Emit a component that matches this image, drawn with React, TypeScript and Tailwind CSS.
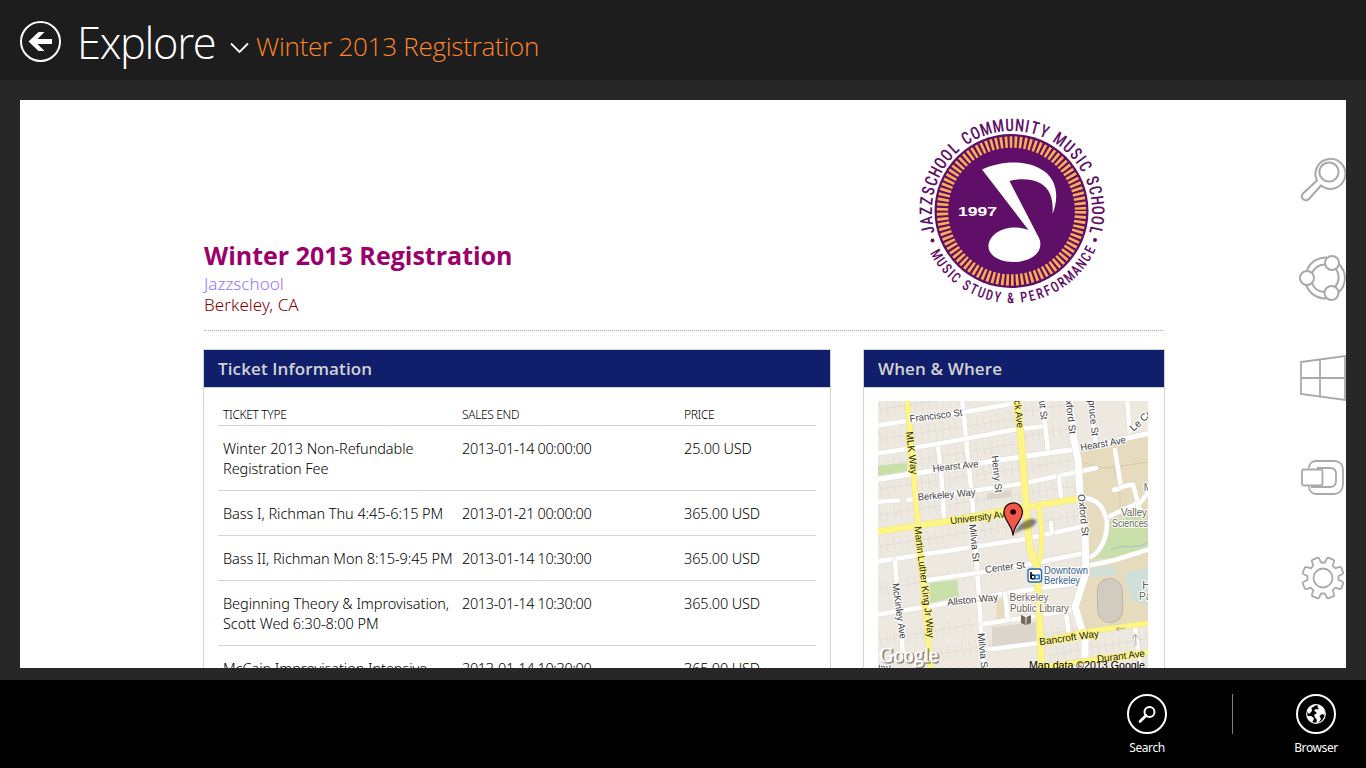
import type { ReactNode } from "react";

type Ticket = { lines: string[]; end: string; price: string };

const tickets: Ticket[] = [
  { lines: ["Winter 2013 Non-Refundable", "Registration Fee"], end: "2013-01-14 00:00:00", price: "25.00 USD" },
  { lines: ["Bass I, Richman Thu 4:45-6:15 PM"], end: "2013-01-21 00:00:00", price: "365.00 USD" },
  { lines: ["Bass II, Richman Mon 8:15-9:45 PM"], end: "2013-01-14 10:30:00", price: "365.00 USD" },
  { lines: ["Beginning Theory & Improvisation,", "Scott Wed 6:30-8:00 PM"], end: "2013-01-14 10:30:00", price: "365.00 USD" },
  { lines: ["McCain Improvisation Intensive"], end: "2013-01-14 10:30:00", price: "365.00 USD" },
];

const glyphWeight = (c: string) => (c === "I" ? 0.55 : c === " " ? 0.6 : c === "M" ? 1.25 : c === "J" ? 0.9 : 1);

function RingText({ text, from, to, radius, size, inward }: { text: string; from: number; to: number; radius: number; size: number; inward?: boolean }) {
  const chars = [...text];
  const total = chars.reduce((s, c) => s + glyphWeight(c), 0) - (glyphWeight(chars[0]) + glyphWeight(chars[chars.length - 1])) / 2;
  let acc = -glyphWeight(chars[0]) / 2;
  return (
    <g fill="#5f0f67" fontSize={size} textAnchor="middle" className="font-['Roboto'] font-medium font-stretch-condensed">
      {chars.map((c, i) => {
        const w = glyphWeight(c);
        const deg = from + ((acc + w / 2) / total) * (to - from);
        acc += w;
        const a = (deg * Math.PI) / 180;
        return (
          <text key={i} transform={`translate(${radius * Math.cos(a)} ${radius * Math.sin(a)}) rotate(${inward ? deg - 90 : deg + 90}) scale(.86 1)`}>
            {c}
          </text>
        );
      })}
    </g>
  );
}

function SchoolLogo() {
  return (
    <svg className="h-[200px] w-[200px]" viewBox="-100 -100 200 200">
      <circle cx="-.5" r="77" fill="#5f0f67" />
      <circle cx="-.5" r="69" fill="none" stroke="#f9ac55" strokeWidth="11.400" strokeDasharray="2.700 2.118" />
      <path d="M-30 -41.500C-12 -50.500 16 -52 32 -40C47 -29 46 -10 40.500 3C41.500 -10 39 -22 28 -28C18 -33 5 -32 -2.500 -30L27 27C32.500 39 21.500 51 1.500 51C-14.500 51 -24.500 43 -23.500 34C-21.500 20 -1.500 12 16.500 19Z" fill="#fff" />
      <text x="-54" y="4.500" fontSize="13" textLength="39" lengthAdjust="spacingAndGlyphs" fill="#fff" className="font-['Liberation_Sans'] font-bold">1997</text>
      <RingText text="JAZZSCHOOL COMMUNITY MUSIC SCHOOL" from={-193} to={13} radius={80} size={17.5} />
      <RingText text="MUSIC STUDY & PERFORMANCE" from={150} to={26.500} radius={92} size={14.5} inward />
      <circle cx="-79.500" cy="29.500" r="2" fill="#5f0f67" />
      <circle cx="83" cy="29" r="2" fill="#5f0f67" />
    </svg>
  );
}

function Street({ d, w = 5, color = "#fff", edge = "#dedad2" }: { d: string; w?: number; color?: string; edge?: string }) {
  return (
    <g fill="none" strokeLinecap="round" strokeLinejoin="round">
      <path d={d} stroke={edge} strokeWidth={w + 1} />
      <path d={d} stroke={color} strokeWidth={w} />
    </g>
  );
}

function Label({ x, y, a = 0, w, size = 10, fill = "#3c3c3c", halo = "#fff", children }: { x: number; y: number; a?: number; w?: number; size?: number; fill?: string; halo?: string; children: ReactNode }) {
  return (
    <text
      transform={`translate(${x} ${y}) rotate(${a})`}
      textAnchor="middle"
      dominantBaseline="central"
      fontSize={size}
      textLength={w}
      lengthAdjust="spacingAndGlyphs"
      fill={fill}
      stroke={halo}
      strokeWidth="2"
      strokeLinejoin="round"
      paintOrder="stroke"
      className="font-['Liberation_Sans']"
    >
      {children}
    </text>
  );
}

const whiteStreets = [
  "M962 398L973 508L984 672", "M938 447L940 462", "M941 470L944 518",
  "M874 426L965 412L1016 403", "M874 454L937 444L1013 430L1045 426",
  "M874 502L898 500.500", "M908 500L1020 484L1072 473L1096 468",
  "M874 562L1020 540L1080 527", "M928 580L983 572L1020 566L1085 553",
  "M874 615L925 607L1020 591L1078 583", "M983 624L1010 620L1072 610", "M985 650L1040 643",
  "M895 561L898 600L903 652", "M1042 398L1048 450", "M1090 398L1096 446", "M1127 398L1130 434",
  "M1131 430L1150 411", "M1059 477L1061 498", "M1051 523L1052 533", "M1066 612L1069 637",
  "M1135 627L1140 665", "M1005 594L1008 620", "M1115 450L1121 488L1114 490", "M1121 487L1133 484.500L1138 503L1108 517",
  "M1150 491L1138 505L1141 512",
  "M1085 498C1099 500 1104 508 1107 522C1107 535 1103 546 1096 553C1092 557 1088 558 1085 558", "M1087 566L1115 560L1150 549",
];

const parcelRows = [
  "M880 409L1015 389", "M880 439L1015 419", "M880 466L1015 444", "M880 489L1075 460", "M880 515L1075 486",
  "M880 546L1082 515", "M880 589L1082 556", "M880 640L975 624", "M935 655L1080 628", "M1025 436L1072 429", "M1050 655L1148 638", "M1025 411L1072 404",
];

function EventMap() {
  return (
    <svg className="block h-[270px] w-[270px]" viewBox="878 401 270 270">
      <rect x="878" y="401" width="270" height="270" fill="#ede9e1" />
      <g fill="none" stroke="#dfdad1" strokeWidth=".8">
        {parcelRows.map((d) => <path key={d} d={d} />)}
      </g>
      <g fill="none" stroke="#e1dcd3" strokeWidth="15" strokeDasharray=".7 6.300">
        {parcelRows.map((d) => <path key={d} d={d} />)}
      </g>
      <path d="M1078 452L1150 435V624L1085 635L1074 610L1086 580V540Z" fill="#e7dbbd" />
      <path d="M1115 458V475M1082 462L1104 468L1150 462M1120 490V512M1138 535L1150 532" fill="none" stroke="#cfc4a5" strokeWidth=".8" />
      <path d="M1109 522L1138 513L1150 516V548L1114 558L1094 559C1104 549 1109 535 1109 522Z" fill="#c9dfaa" />
      <path d="M1111 550C1122 542 1136 552 1150 541" fill="none" stroke="#9cc3c9" strokeWidth="1" />
      <path d="M876 466L907 463V471L876 476Z M930 583L957 580L959 597L930 603Z" fill="#c9dfaa" />
      <path d="M997 600L1004 598V618L996 620Z" fill="#e7dbbd" />
      <path d="M992 627L1036 622V643L992 648Z M987 494L1011 490V497L987 500Z" fill="#dcd5cb" />
      <path d="M1091 568L1116 566V575L1092 578Z M1125 573L1150 567V605L1133 601Q1126 588 1125 573Z" fill="#d0dfd8" />
      {whiteStreets.map((d) => <Street key={d} d={d} w={4.5} />)}
      <Street d="M874 480L943 469L1020 457L1077 449L1150 433" w={5} />
      <Street d="M1069 398L1074 440L1078 460L1080 495L1085 535L1086 573L1075 607L1085 640L1085 672" w={7} />
      <Street d="M874 532L943 522L1020 508L1077 499" w={6} color="#fdf684" edge="#e6dd9e" />
      <Street d="M907 398L918 525L931 674" w={5} color="#fdf684" edge="#e6dd9e" />
      <Street d="M1040 642L1085 632L1150 623" w={5} color="#fdf684" edge="#e6dd9e" />
      <Street d="M1042 667L1150 652" w={5} color="#fdf684" edge="#e6dd9e" />
      <Street d="M1039 508L1042 530L1041 553L1037 568" w={4.5} color="#fdf684" edge="#e6dd9e" />
      <Street d="M1017 398L1022 449L1028 530L1030 550L1037 567L1042 674" w={6.5} color="#fdf684" edge="#e6dd9e" />
      <rect x="1097.500" y="578.500" width="25" height="44" rx="12.500" fill="#d2cbc0" stroke="#bdb6aa" transform="rotate(-1 1110 600)" />
      <path d="M1117 629L1125 628M1119 627L1116 629L1119 631M1136 646L1135.500 635M1133 638L1135.500 634L1138 638" fill="none" stroke="#999" strokeWidth=".8" />

      <Label x={936} y={415.5} a={-7} w={53}>Francisco St</Label>
      <Label x={912} y={453} a={83} w={43} halo="#fdf684" fill="#222">MLK Way</Label>
      <Label x={955.5} y={466} a={-6} w={46}>Hearst Ave</Label>
      <Label x={997} y={474} a={84} w={37}>Henry St</Label>
      <Label x={946.500} y={494.5} a={-5} w={58}>Berkeley Way</Label>
      <Label x={980} y={517} a={-7} w={60} halo="#fdf684" fill="#222">University Ave</Label>
      <Label x={1019} y={414} a={84} w={28} halo="#fdf684" fill="#222">ck Ave</Label>
      <Label x={1043.5} y={410} a={84} w={19}>ut St</Label>
      <Label x={1071} y={417} a={84} w={34}>xford St</Label>
      <Label x={1093.5} y={418} a={84} w={36}>pruce St</Label>
      <Label x={1103} y={443.5} a={-10} w={46}>Hearst Ave</Label>
      <Label x={1141} y={420} a={-43} w={27}>Le Co</Label>
      <Label x={1083.500} y={515} a={84} w={42}>Oxford St</Label>
      <Label x={1134} y={512.500} w={26} fill="#665">Valley</Label>
      <Label x={1130} y={523} w={36} fill="#665">Sciences</Label>
      <Label x={1148} y={487} fill="#665">M</Label>
      <Label x={924.5} y={582} a={83} w={112} halo="#fdf684" fill="#222">Martin Luther King Jr Way</Label>
      <Label x={974.500} y={543} a={84} w={38}>Milvia St</Label>
      <Label x={1005} y={567} a={-7} w={40}>Center St</Label>
      <Label x={972.500} y={599.5} a={-6} w={51}>Allston Way</Label>
      <Label x={899.500} y={611} a={82} w={56}>McKinley Ave</Label>
      <Label x={983} y={652} a={84} w={38}>Milvia St</Label>
      <Label x={881} y={668} a={-6}>Way</Label>
      <Label x={1066} y={570.500} w={44} fill="#36618e">Downtown</Label>
      <Label x={1062} y={580.500} w={36} fill="#36618e">Berkeley</Label>
      <Label x={1029} y={597.500} w={39} fill="#6b6257">Berkeley</Label>
      <Label x={1039.500} y={608.500} w={59} fill="#6b6257">Public Library</Label>
      <Label x={1150} y={585.500} w={16} fill="#665">Ha</Label>
      <Label x={1147} y={596.500} w={16} fill="#665">Par</Label>
      <Label x={1069} y={637.5} a={-8} w={60} halo="#fdf684" fill="#222">Bancroft Way</Label>
      <Label x={1121} y={656} a={-7} w={48} halo="#fdf684" fill="#222">Durant Ave</Label>

      <rect x="1028" y="569" width="13.500" height="13" rx="2.500" fill="#fff" stroke="#2b6cb0" strokeWidth="1.400" />
      <path d="M1031 572V579" stroke="#111" strokeWidth="1.700" />
      <circle cx="1033" cy="577" r="2" fill="none" stroke="#111" strokeWidth="1.500" />
      <circle cx="1037.200" cy="577" r="2" fill="none" stroke="#2b7cc8" strokeWidth="1.500" />
      <path d="M1039.300 574.500V579.500" stroke="#2b7cc8" strokeWidth="1.300" />
      <path d="M1021 615L1025.500 617V625L1021 623ZM1031 615L1026.500 617V625L1031 623Z" fill="#75675a" />

      <path d="M1013 536C1016 526 1026 518 1034 519C1040 521 1033 528 1026 529C1020 530 1016 532 1013 536Z" fill="#000" opacity=".45" className="blur-[.8px]" />
      <path d="M1013 535.500C1012 524 1004 521 1004 512A9.200 9.200 0 0 1 1022.400 512C1022.400 521 1014 524 1013 535.500Z" fill="#f5564a" stroke="#1a0a08" strokeWidth="1.200" />
      <circle cx="1013.100" cy="512" r="2.800" fill="#1a0505" />

      <text x="880.500" y="663" fontSize="22" textLength="59" lengthAdjust="spacingAndGlyphs" fill="#555" stroke="#666" strokeWidth="1.500" opacity=".7" className="font-['Liberation_Serif']">Google</text>
      <text x="879" y="662" fontSize="22" textLength="59" lengthAdjust="spacingAndGlyphs" fill="#fff" stroke="#fff" strokeWidth=".6" className="font-['Liberation_Serif']">Google</text>
      <text x="1029" y="669" fontSize="11" textLength="116" lengthAdjust="spacingAndGlyphs" fill="#000" className="font-['Liberation_Sans']">Map data ©2013 Google</text>
    </svg>
  );
}

function PanelHeader({ children }: { children: ReactNode }) {
  return (
    <h2 className="flex h-[38px] items-center border-b border-[#d3d3d3] bg-[#111e6c] pl-3.5 text-[17px] font-semibold tracking-[0.12px] text-[#d3d3d3]">
      {children}
    </h2>
  );
}

const gearPath = Array.from({ length: 8 }, (_, i) => {
  const at = (offset: number, r: number) => {
    const a = ((i * 45 + 22.5 + offset) * Math.PI) / 180;
    return `${(r * Math.cos(a)).toFixed(2)} ${(r * Math.sin(a)).toFixed(2)}`;
  };
  return `${i === 0 ? "M" : "L"}${at(-15.5, 15.6)}L${at(-12, 19.2)}Q${at(-11.5, 20.6)} ${at(-8, 21)}L${at(8, 21)}Q${at(11.5, 20.6)} ${at(12, 19.2)}L${at(15.5, 15.6)}`;
}).join("") + "Z";

function Charms() {
  return (
    <nav className="flex w-[47px] flex-col gap-[50px] pt-[53px]">
      <svg viewBox="1299 153 47 50" className="h-[50px] w-[47px] fill-white stroke-[#a9a9a9] stroke-2">
        <path d="M1317 180.500L1303 193.500C1299.500 198 1305 202.500 1309 199L1321 185.500A15 15 0 1 0 1317 180.500Z" />
        <circle cx="1329" cy="172" r="9.600" />
      </svg>
      <svg viewBox="1299 253 47 50" className="h-[50px] w-[47px] fill-none stroke-[#a9a9a9] stroke-2">
        <path d="M1307 270C1311 261 1319 257 1327 257.500M1338 263C1343 268 1345 273 1345 278C1345 284 1342.500 289 1338 293M1306 285C1310 294 1317 298.500 1326 298.500" />
        <path d="M1312 273C1315 267 1319 264.500 1325 264.500M1336 269C1339.500 274 1340 281 1335 287M1312 283C1314 289 1318 291.500 1324 292" />
        <circle cx="1307" cy="278" r="7" className="fill-white" />
        <circle cx="1332" cy="263" r="7" className="fill-white" />
        <circle cx="1331.500" cy="293" r="7" className="fill-white" />
      </svg>
      <svg viewBox="1299 353 47 50" className="h-[50px] w-[47px] fill-none stroke-[#a9a9a9] stroke-[1.8px]">
        <path d="M1301 362L1345 356V400L1301 394ZM1320 359.500V397M1301 378H1345" />
      </svg>
      <svg viewBox="1299 453 47 50" className="h-[50px] w-[47px] fill-none stroke-[#a9a9a9] stroke-[1.8px]">
        <path d="M1309 468C1309 463.500 1312 461 1316 461H1334C1339.500 461 1343 464.500 1343 470V484C1343 490 1339.500 494 1334 494H1316C1312 494 1309 490.500 1309 486.500" />
        <path d="M1317 468H1330Q1336 468 1336 474V481Q1336 487 1330 487H1311" />
        <rect x="1302" y="469.500" width="20.500" height="16" rx="1.500" className="fill-white" />
      </svg>
      <svg viewBox="-24 -25 47 50" className="h-[50px] w-[47px] fill-none stroke-[#a9a9a9] stroke-[1.8px]">
        <path d={gearPath} strokeLinejoin="round" />
        <circle r="9.500" />
      </svg>
    </nav>
  );
}

function BarButton({ label, children }: { label: string; children: ReactNode }) {
  return (
    <button className="flex w-[60px] flex-col items-center text-white">
      <svg viewBox="-20 -20 40 40" className="h-10 w-10">
        <circle r="19" fill="none" stroke="#fff" strokeWidth="2" />
        {children}
      </svg>
      <span className="mt-[5px] text-[12px] leading-[18px] tracking-[-0.4px]">{label}</span>
    </button>
  );
}

export default function App() {
  return (
    <div className="flex h-[768px] w-[1366px] flex-col overflow-hidden bg-[repeating-linear-gradient(135deg,#2d2d2d_0px,#2d2d2d_1.4px,#212121_1.4px,#212121_2.828px)] font-['Open_Sans',sans-serif] whitespace-nowrap">
      <header className="flex h-20 shrink-0 bg-[#1d1d1d] pl-5">
        <svg viewBox="0 0 42 42" className="mt-[21px] h-[42px] w-[42px]">
          <circle cx="20.500" cy="20.500" r="19.500" fill="none" stroke="#fff" strokeWidth="2" />
          <path d="M8.500 20.500L18.500 11H24.500L17.500 18H32V23H17.500L24.500 30H18.500Z" fill="#fff" />
        </svg>
        <h1 className="mt-[13px] ml-[15px] w-[152px] text-[43.5px] leading-[60px] font-light tracking-[-1.35px] text-white">Explore</h1>
        <svg viewBox="0 0 20 12" className="mt-[42px] h-3 w-5">
          <path d="M2 1.500L10.500 10L19 1.500" fill="none" stroke="#fff" strokeWidth="1.800" />
        </svg>
        <p className="mt-[28px] ml-[7px] text-[26px] leading-9 font-light tracking-[-0.26px] text-[#ff8629]">Winter 2013 Registration</p>
      </header>

      <main className="flex h-[600px] shrink-0 px-5 pt-5 pb-3">
        <div className="flex h-[568px] w-[1326px] overflow-hidden bg-white">
          <article className="ml-[183px] flex w-[962px] flex-col">
            <section className="ml-px flex h-[231px] w-[959px] shrink-0 justify-between border-b border-dotted border-[#a9a9a9]">
              <div className="pt-[138px]">
                <h2 className="text-[25px] leading-[34px] font-bold text-[#99006b]">Winter 2013 Registration</h2>
                <p className="mt-px font-['Noto_Sans'] text-[17px] leading-[21px] font-light tracking-[0.05px] text-[#9575ff]">Jazzschool</p>
                <p className="font-['Noto_Sans'] text-[17px] leading-[21px] font-light tracking-[0.05px] text-[#8b0000]">Berkeley, CA</p>
              </div>
              <div className="pt-[11px] pr-[51px]">
                <SchoolLogo />
              </div>
            </section>

            <div className="mt-[18px] flex justify-between">
              <section className="h-[340px] w-[628px] border border-[#d3d3d3]">
                <PanelHeader>Ticket Information</PanelHeader>
                <table className="mx-3.5 w-[598px] table-fixed border-collapse text-left font-['Noto_Sans'] text-[14.5px] leading-5 font-light text-black">
                  <colgroup>
                    <col className="w-[239px]" />
                    <col className="w-[222px]" />
                    <col />
                  </colgroup>
                  <thead>
                    <tr className="h-[37px] border-b border-[#d3d3d3] align-bottom text-[12px] leading-4 tracking-[-0.35px]">
                      <th className="pb-[2px] pl-[5px] font-light">TICKET TYPE</th>
                      <th className="pb-[2px] pl-[5px] font-light">SALES END</th>
                      <th className="pb-[2px] pl-[5px] font-light">PRICE</th>
                    </tr>
                  </thead>
                  <tbody>
                    {tickets.map((t) => (
                      <tr key={t.lines[0]} className="border-b border-[#d3d3d3] align-top">
                        <td className="pt-[12px] pb-[12px] pl-[5px] tracking-[-0.05px]">
                          {t.lines.map((l) => <div key={l}>{l}</div>)}
                        </td>
                        <td className="pt-[12px] pb-[12px] pl-[5px] tracking-[-0.35px]">{t.end}</td>
                        <td className="pt-[12px] pb-[12px] pl-[5px] tracking-[-0.15px]">{t.price}</td>
                      </tr>
                    ))}
                  </tbody>
                </table>
              </section>

              <section className="h-[340px] w-[302px] border border-[#d3d3d3]">
                <PanelHeader>When &amp; Where</PanelHeader>
                <div className="px-3.5 pt-[13px]">
                  <EventMap />
                </div>
              </section>
            </div>
          </article>
          <div className="ml-auto">
            <Charms />
          </div>
        </div>
      </main>

      <footer className="flex h-[88px] shrink-0 justify-end bg-black pt-3.5 pr-5 font-['Noto_Sans']">
        <BarButton label="Search">
          <circle cx="2.500" cy="-2" r="5" fill="none" stroke="#fff" strokeWidth="2" />
          <path d="M-1 1.500L-7 7.500" stroke="#fff" strokeWidth="2.800" strokeLinecap="round" />
        </BarButton>
        <div className="mr-[53px] ml-[55px] h-10 w-px bg-[#808080]" />
        <BarButton label="Browser">
          <circle r="9.300" fill="none" stroke="#fff" strokeWidth="1.200" />
          <path d="M-9 -3C-8 -7 -4 -9.500 0 -9.500L-2 -7.500L-4.500 -6L-4 -3L-7 0Z M2.500 -9L7 -6.500L9 -1L8.500 1L6 0L3.500 2L5 5L3 8L0 9L1 6L-1 3.500L-2 1L1 -1L-2 -3.500L0 -5L3 -4.500L1.500 -7Z M-8.500 2L-5 2L-2 4L-3 7L-4 8L-7 6Z" fill="#fff" />
        </BarButton>
      </footer>
    </div>
  );
}
